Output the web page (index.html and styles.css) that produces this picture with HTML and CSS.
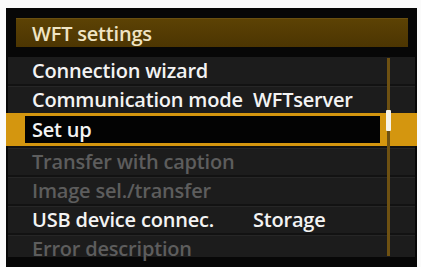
FILE: index.html
```html
<!DOCTYPE html>
<html>
<head>
<meta charset="utf-8">
<link rel="stylesheet" href="styles.css">
</head>
<body>
<div class="frame">
  <div class="panel">
    <div class="header">WFT settings</div>
    <div class="list">
      <div class="row"><span class="label">Connection wizard</span></div>
      <div class="row"><span class="label">Communication mode</span><span class="value">WFTserver</span></div>
      <div class="row selected"><div class="selbox"><span class="label">Set up</span></div></div>
      <div class="row disabled"><span class="label">Transfer with caption</span></div>
      <div class="row disabled"><span class="label">Image sel./transfer</span></div>
      <div class="row"><span class="label">USB device connec.</span><span class="value">Storage</span></div>
      <div class="row disabled"><span class="label">Error description</span></div>
      <div class="scrollbar"><div class="thumb"></div></div>
    </div>
  </div>
</div>
</body>
</html>
```
FILE: styles.css
```css
html, body {
  margin: 0;
  padding: 0;
  background: #fbfbfb;
}
.frame {
  width: 421px;
  height: 267px;
  box-sizing: border-box;
  padding: 8px 4px 0 6px;
  overflow: hidden;
}
.panel {
  height: 259px;
  background: #070707;
  display: flex;
  flex-direction: column;
  font-family: "Open Sans", "Noto Sans", sans-serif;
  font-weight: 600;
  font-size: 20px;
  letter-spacing: -0.2px;
}
.header {
  margin: 10px 9px 0 10px;
  height: 29px;
  box-sizing: border-box;
  padding-left: 16px;
  display: flex;
  align-items: center;
  color: #efe4c4;
  background: linear-gradient(#5c4204, #4c3502);
  border-top: 1px solid #6a5010;
}
.list {
  position: relative;
  margin: 10px 2px 0 2px;
  height: 200px;
  display: grid;
  grid-template-rows: repeat(7, 1fr);
  background: #1c1c1c;
}
.row {
  display: grid;
  grid-template-columns: 221px auto;
  align-items: center;
  padding-left: 24px;
  color: #f3f3f3;
  border-top: 2px solid #121212;
  box-shadow: inset 0 1px 0 #262626;
}
.row:first-child {
  border-top: none;
  box-shadow: none;
}
.row.disabled {
  color: #5d5d5d;
}
.row.selected {
  margin: 0 -2px;
  padding: 3px 37px 3px 19px;
  background: #d4960f;
  border-top: none;
  box-shadow: none;
  display: flex;
}
.selbox {
  flex: 1;
  background: #030303;
  display: flex;
  align-items: center;
  padding-left: 7px;
}
.scrollbar {
  position: absolute;
  left: 379px;
  top: 1px;
  bottom: 1px;
  width: 3px;
  background: #6e5112;
}
.thumb {
  position: absolute;
  left: -1px;
  top: 52px;
  width: 5px;
  height: 21px;
  background: #f6f3ea;
  border-radius: 1px;
}
```
